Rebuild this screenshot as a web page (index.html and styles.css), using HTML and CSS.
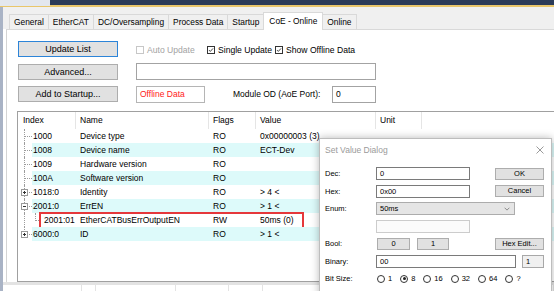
FILE: index.html
```html
<!DOCTYPE html>
<html lang="en">
<head>
    <meta charset="UTF-8">
    <meta name="viewport" content="width=device-width, initial-scale=1.0">
    <title>CoE - Online</title>
    <link rel="stylesheet" href="styles.css">
</head>
<body>

    <div class="topbar">
        <div class="doc-tab"></div>
        <div class="doc-rest"></div>
    </div>

    <div class="window">
        <div class="tabs">
            <div class="tab">General</div>
            <div class="tab">EtherCAT</div>
            <div class="tab">DC/Oversampling</div>
            <div class="tab">Process Data</div>
            <div class="tab">Startup</div>
            <div class="tab active">CoE - Online</div>
            <div class="tab last">Online</div>
        </div>

        <div class="panel">
            <div class="controls">
                <button class="btn focused">Update List</button>
                <div class="checks">
                    <label class="check check-auto disabled"><span class="box"></span>Auto Update</label>
                    <label class="check check-single"><span class="box"><svg viewBox="0 0 8 8"><path d="M1.3 4.1 L3.1 5.9 L6.7 1.9"/></svg></span>Single Update</label>
                    <label class="check"><span class="box"><svg viewBox="0 0 8 8"><path d="M1.3 4.1 L3.1 5.9 L6.7 1.9"/></svg></span>Show Offline Data</label>
                </div>
                <button class="btn">Advanced...</button>
                <div class="textbox wide"></div>
                <button class="btn">Add to Startup...</button>
                <div class="od-row">
                    <div class="textbox offline">Offline Data</div>
                    <span class="od-label">Module OD (AoE Port):</span>
                    <div class="textbox port">0</div>
                </div>
            </div>

            <div class="list">
                <div class="list-head">
                    <span>Index</span>
                    <span>Name</span>
                    <span>Flags</span>
                    <span>Value</span>
                    <span>Unit</span>
                    <span class="rest"></span>
                </div>
                <div class="row">
                    <span class="idx">1000</span><span>Device type</span><span>RO</span><span>0x00000003 (3)</span><span></span><span></span>
                </div>
                <div class="row alt">
                    <span class="idx">1008</span><span>Device name</span><span>RO</span><span>ECT-Dev</span><span></span><span></span>
                </div>
                <div class="row">
                    <span class="idx">1009</span><span>Hardware version</span><span>RO</span><span></span><span></span><span></span>
                </div>
                <div class="row alt">
                    <span class="idx">100A</span><span>Software version</span><span>RO</span><span></span><span></span><span></span>
                </div>
                <div class="row">
                    <span class="idx"><i class="exp plus"></i>1018:0</span><span>Identity</span><span>RO</span><span>&gt; 4 &lt;</span><span></span><span></span>
                </div>
                <div class="row alt">
                    <span class="idx"><i class="exp"></i>2001:0</span><span>ErrEN</span><span>RO</span><span>&gt; 1 &lt;</span><span></span><span></span>
                </div>
                <div class="row marked">
                    <span class="idx child"><i class="elbow"></i>2001:01</span><span>EtherCATBusErrOutputEN</span><span>RW</span><span>50ms (0)</span><span></span><span></span>
                </div>
                <div class="row alt last">
                    <span class="idx"><i class="exp plus"></i>6000:0</span><span>ID</span><span>RO</span><span>&gt; 1 &lt;</span><span></span><span></span>
                </div>
            </div>
        </div>

        <div class="lower">
            <span></span>
            <span></span>
            <span></span>
            <span></span>
            <span></span>
            <span></span>
            <span class="rest"></span>
        </div>
    </div>

    <div class="dialog">
        <div class="dlg-title">
            <span>Set Value Dialog</span>
            <svg class="close" viewBox="0 0 8 8"><path d="M0.5 0.5 L7.5 7.5 M7.5 0.5 L0.5 7.5"/></svg>
        </div>
        <div class="dlg-body">
            <div class="dlg-row">
                <span class="dlg-label">Dec:</span>
                <div class="field short">0</div>
                <button class="dbtn right">OK</button>
            </div>
            <div class="dlg-row">
                <span class="dlg-label">Hex:</span>
                <div class="field short">0x00</div>
                <button class="dbtn right">Cancel</button>
            </div>
            <div class="dlg-row">
                <span class="dlg-label">Enum:</span>
                <div class="field combo">50ms
                    <svg class="chev" viewBox="0 0 8 5"><path d="M0.8 0.8 L4 4 L7.2 0.8"/></svg>
                </div>
            </div>
            <div class="dlg-row">
                <span class="dlg-label"></span>
                <div class="field short blank"></div>
            </div>
            <div class="dlg-row">
                <span class="dlg-label">Bool:</span>
                <button class="dbtn bool">0</button>
                <button class="dbtn bool second">1</button>
                <button class="dbtn right">Hex Edit...</button>
            </div>
            <div class="dlg-row">
                <span class="dlg-label">Binary:</span>
                <div class="field bin">00</div>
                <div class="field bits">1</div>
            </div>
            <div class="dlg-row">
                <span class="dlg-label">Bit Size:</span>
                <label class="radio"><span class="dot"></span>1</label>
                <label class="radio"><span class="dot on"></span>8</label>
                <label class="radio"><span class="dot"></span>16</label>
                <label class="radio"><span class="dot"></span>32</label>
                <label class="radio"><span class="dot"></span>64</label>
                <label class="radio"><span class="dot"></span>?</label>
            </div>
        </div>
    </div>

</body>
</html>
```

FILE: styles.css
```css
* {
    box-sizing: border-box;
}
body {
    margin: 0;
    width: 554px;
    height: 291px;
    overflow: hidden;
    position: relative;
    background: #f0f0f0;
    font-family: "Liberation Sans", Arial, sans-serif;
    font-size: 8.5px;
    color: #000;
}

/* ide strip on top */
.topbar {
    display: flex;
    height: 7px;
}
.doc-tab {
    width: 50px;
    background: #e3e7ee;
    border-bottom: 1px solid #e9c66b;
}
.doc-rest {
    flex: 1;
    background: #2b3b58;
    border-bottom: 2px solid #e9c66b;
}

.window {
    border-left: 3px solid #a9b3c5;
    background: #fff;
    height: 284px;
}

/* tabs */
.tabs {
    display: flex;
    align-items: flex-end;
    height: 22px;
    padding-left: 6px;
    background: #f0f0f0;
}
.tab {
    height: 15px;
    line-height: 14px;
    padding: 0 4px;
    margin-left: -1px;
    border: 1px solid #d9d9d9;
    border-bottom: 0;
    background: #f0f0f0;
    font-size: 8.4px;
    white-space: nowrap;
}
.tab:first-child {
    margin-left: 0;
}
.tab.active {
    position: relative;
    z-index: 2;
    height: 18px;
    line-height: 17px;
    margin-bottom: -1px;
    padding: 0 5px;
    background: #fff;
}

.panel {
    position: relative;
    margin-left: 3px;
    height: 253px;
    padding: 11px 0 0 11px;
    border-top: 1px solid #d9d9d9;
    border-left: 1px solid #d4d4d4;
    background: #fff;
}

/* buttons and boxes above the list */
.controls {
    display: grid;
    grid-template-columns: 100px 1fr;
    grid-auto-rows: 16px;
    column-gap: 18px;
    row-gap: 6.5px;
    align-items: center;
}
.btn {
    width: 100px;
    height: 16px;
    padding: 0;
    border: 1px solid #adadad;
    background: #e1e1e1;
    font-family: inherit;
    font-size: 9px;
    color: #000;
}
.btn.focused {
    border-color: #2c84d8;
}
.checks {
    display: flex;
    align-items: center;
    padding-top: 1px;
    font-size: 8.6px;
}
.check {
    display: flex;
    align-items: center;
    gap: 3px;
    white-space: nowrap;
}
.check-auto {
    width: 71px;
}
.check-single {
    width: 68px;
}
.box {
    width: 8px;
    height: 8px;
    border: 1px solid #333;
    background: #fff;
}
.box svg {
    display: block;
    width: 6px;
    height: 6px;
    fill: none;
    stroke: #222;
    stroke-width: 1.1;
}
.check.disabled {
    color: #a3a3a3;
}
.check.disabled .box {
    border-color: #c7c7c7;
}
.textbox {
    height: 17px;
    border: 1px solid #a3a3a3;
    background: #fff;
    padding-left: 3px;
    line-height: 15px;
}
.textbox.wide {
    width: 240px;
}
.od-row {
    display: flex;
    align-items: center;
    width: 240px;
}
.textbox.offline {
    width: 69px;
    border-color: #b5b5b5;
    color: #ff1a1a;
}
.od-label {
    margin-left: 28px;
}
.textbox.port {
    width: 44px;
    margin-left: auto;
}

/* object list */
.list {
    margin: 9px -40px 0 -1px;
    height: 171px;
    border: 1px solid #a0a0a0;
    border-right: 0;
    background: #fff;
}
.list-head, .row {
    display: grid;
    grid-template-columns: 58px 133px 47px 120px 46px 1fr;
}
.list-head {
    height: 17px;
    line-height: 16px;
}
.list-head span {
    padding-left: 4px;
    border-right: 1px solid #e5e5e5;
}
.list-head span:first-child {
    padding-left: 5px;
}
.list-head .rest {
    border-right: 0;
}
.row {
    position: relative;
    height: 14px;
    line-height: 14px;
}
.row span {
    padding-left: 4px;
    white-space: nowrap;
}
.row.alt {
    background: linear-gradient(to right, transparent 14px, #ddfafa 14px);
}
.row .idx {
    position: relative;
    padding-left: 15px;
}
.idx::before {
    content: "";
    position: absolute;
    left: 6px;
    top: 0;
    bottom: 0;
    border-left: 1px dotted #9c9c9c;
}
.idx::after {
    content: "";
    position: absolute;
    left: 7px;
    top: 7px;
    width: 7px;
    border-top: 1px dotted #9c9c9c;
}
.row.last .idx::before {
    bottom: 7px;
}
.idx.child {
    padding-left: 26px;
}
.idx.child::after {
    display: none;
}
.elbow {
    position: absolute;
    left: 17px;
    top: 0;
    width: 4px;
    height: 8px;
    border-left: 1px dotted #9c9c9c;
    border-bottom: 1px dotted #9c9c9c;
}
.exp {
    position: absolute;
    z-index: 1;
    left: 3px;
    top: 3.5px;
    width: 7px;
    height: 7px;
    border: 1px solid #9a9a9a;
    background: linear-gradient(#333, #333) center / 3px 1px no-repeat, #fff;
}
.exp.plus {
    background: linear-gradient(#333, #333) center / 3px 1px no-repeat,
                linear-gradient(#333, #333) center / 1px 3px no-repeat, #fff;
}
.row.marked::after {
    content: "";
    position: absolute;
    left: 21px;
    top: -1px;
    width: 261px;
    height: 15px;
    border: 2px solid #e5383b;
}

/* next list, cut off at the bottom */
.lower {
    display: grid;
    grid-template-columns: 79px 14px 80px 53px 34px 60px 1fr;
    border-top: 3px solid #e3e3e3;
    height: 12px;
}
.lower span {
    border-right: 1px solid #e3e3e3;
}

/* set value dialog */
.dialog {
    position: absolute;
    z-index: 5;
    left: 319px;
    top: 138px;
    width: 233px;
    height: 170px;
    border: 1px solid #bdbdbd;
    background: #fff;
    box-shadow: 0 0 8px rgba(0, 0, 0, 0.28);
    font-size: 7.5px;
}
.dlg-title {
    display: flex;
    align-items: center;
    justify-content: space-between;
    height: 21px;
    padding: 0 7px 0 5px;
    color: #9a9a9a;
    font-size: 8.5px;
}
.close {
    width: 8px;
    height: 8px;
    fill: none;
    stroke: #808080;
    stroke-width: 0.8;
}
.dlg-body {
    display: grid;
    grid-auto-rows: 13px;
    row-gap: 4.5px;
    padding: 7px 7px 0 5px;
}
.dlg-row {
    display: flex;
    align-items: center;
}
.dlg-label {
    width: 51px;
    flex: none;
}
.field {
    height: 13px;
    line-height: 11px;
    padding-left: 3px;
    border: 1px solid #7a7a7a;
    background: #fff;
}
.field.short {
    width: 94px;
}
.field.blank {
    border-color: #cccccc;
    background: #fbfbfb;
}
.field.combo {
    display: flex;
    align-items: center;
    justify-content: space-between;
    width: 139px;
    padding-right: 4px;
    border-color: #acacac;
    background: #e5e5e5;
}
.chev {
    width: 6px;
    height: 4px;
    fill: none;
    stroke: #606060;
    stroke-width: 0.9;
}
.field.bin {
    width: 140px;
}
.field.bits {
    width: 22px;
    margin-left: auto;
    border-color: #a8a8a8;
    background: #f0f0f0;
}
.dbtn {
    height: 12px;
    padding: 0;
    border: 1px solid #adadad;
    background: #e1e1e1;
    font-family: inherit;
    font-size: 7.5px;
    line-height: 10px;
    color: #000;
}
.dbtn.right {
    width: 49px;
    margin-left: auto;
}
.dbtn.bool {
    width: 33px;
    margin-left: 1px;
}
.dbtn.bool.second {
    width: 32px;
    margin-left: 7px;
}
.radio {
    display: flex;
    align-items: center;
    gap: 3px;
    margin-right: 8px;
}
.radio:first-of-type {
    margin-left: 1px;
}
.dot {
    position: relative;
    width: 8px;
    height: 8px;
    border: 1px solid #333;
    border-radius: 50%;
    background: #fff;
}
.dot.on::after {
    content: "";
    position: absolute;
    left: 1.5px;
    top: 1.5px;
    width: 3px;
    height: 3px;
    border-radius: 50%;
    background: #222;
}
```
